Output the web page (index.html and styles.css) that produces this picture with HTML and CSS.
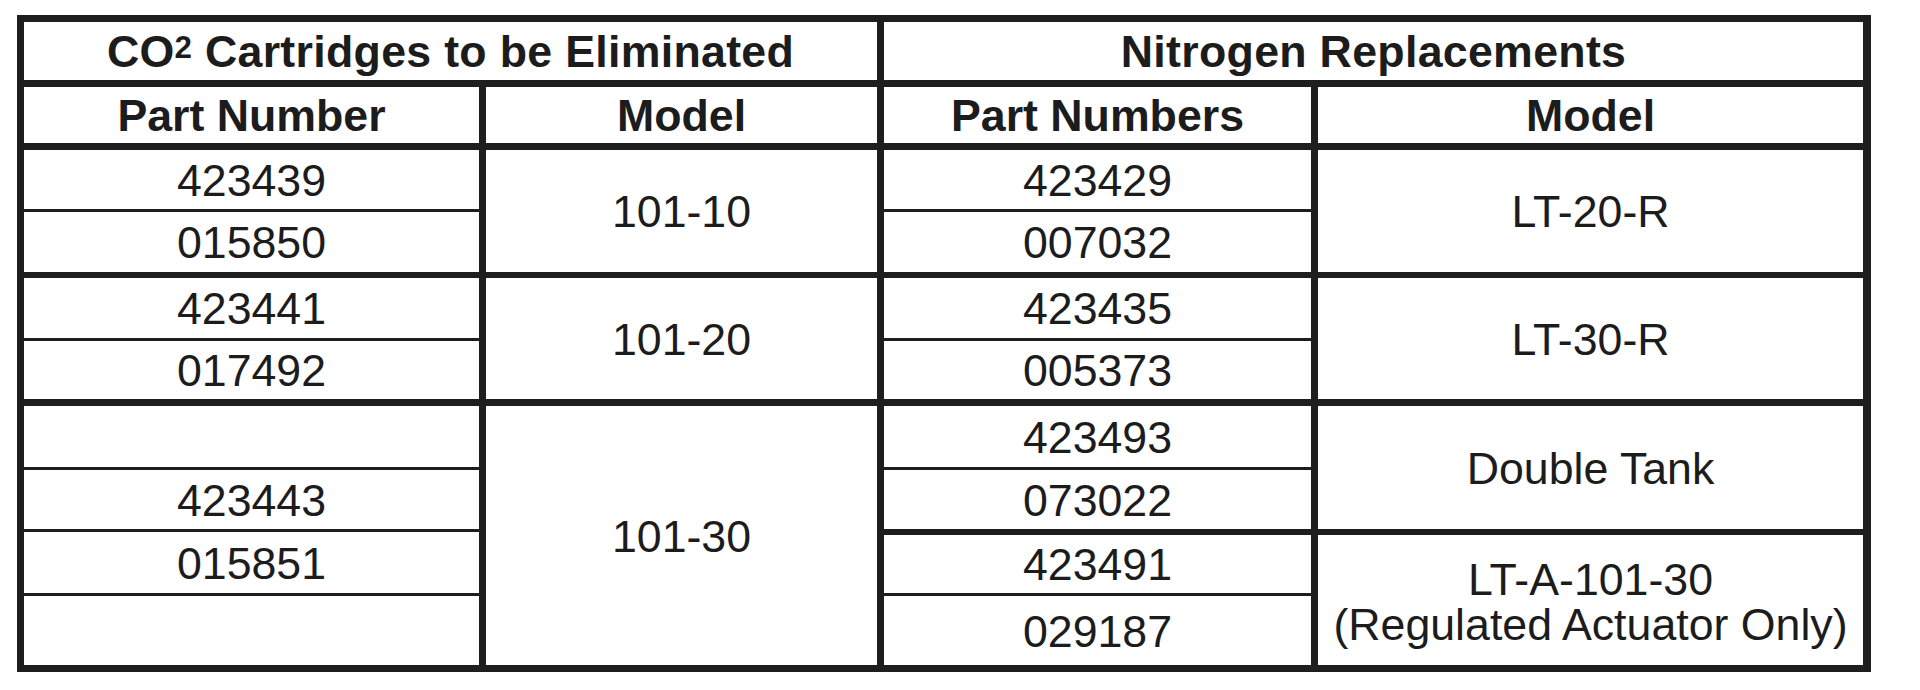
FILE: index.html
```html
<!DOCTYPE html>
<html lang="en">
<head>
<meta charset="utf-8">
<title>CO2 Cartridges to Nitrogen Replacements</title>
<link rel="stylesheet" href="styles.css">
</head>
<body>
<div class="sheet">
  <div class="grid">
    <div class="cell title span2 bb7"><span>CO<span class="sup">2</span> Cartridges to be Eliminated</span></div>
    <div class="cell title span2 last bb7">Nitrogen Replacements</div>

    <div class="cell head bb7">Part Number</div>
    <div class="cell head bb7">Model</div>
    <div class="cell head bb7">Part Numbers</div>
    <div class="cell head last bb7">Model</div>

    <div class="cell bb3">423439</div>
    <div class="cell rows2 bb6">101-10</div>
    <div class="cell bb3">423429</div>
    <div class="cell rows2 last bb6">LT-20-R</div>
    <div class="cell bb6">015850</div>
    <div class="cell bb6">007032</div>

    <div class="cell bb3">423441</div>
    <div class="cell rows2 bb7">101-20</div>
    <div class="cell bb3">423435</div>
    <div class="cell rows2 last bb7">LT-30-R</div>
    <div class="cell bb7">017492</div>
    <div class="cell bb7">005373</div>

    <div class="cell bb3"></div>
    <div class="cell rows4">101-30</div>
    <div class="cell bb3">423493</div>
    <div class="cell rows2 last bb3">Double Tank</div>
    <div class="cell bb3">423443</div>
    <div class="cell bb3">073022</div>
    <div class="cell bb3">015851</div>
    <div class="cell bt3 bb3">423491</div>
    <div class="cell rows2 last bt3 stack">
      <span>LT-A-101-30</span>
      <span>(Regulated Actuator Only)</span>
    </div>
    <div class="cell"></div>
    <div class="cell">029187</div>
  </div>
</div>
</body>
</html>
```

FILE: styles.css
```css
html, body {
  margin: 0;
  padding: 0;
  background: #ffffff;
}

body {
  font-family: "Liberation Sans", Arial, Helvetica, sans-serif;
  color: #1c1c1c;
}

.sheet {
  padding: 15px 0 0 17px;
}

.grid {
  display: grid;
  width: 1839px;
  grid-template-columns: 462px 398px 434px 545px;
  grid-template-rows: 65px 63px 62px 66px 63px 65px 64px 62px 64px 69px;
  border-style: solid;
  border-color: #1e1e1e;
  border-width: 7px 8px 7px 7px;
  background: #ffffff;
}

.cell {
  box-sizing: border-box;
  display: flex;
  align-items: center;
  justify-content: center;
  text-align: center;
  padding-top: 3px;
  font-size: 44.7px;
  line-height: 1;
  white-space: nowrap;
  border-right: 7px solid #1e1e1e;
  border-bottom: 0 solid #1e1e1e;
  border-top: 0 solid #1e1e1e;
}

.last {
  border-right: 0;
}

.title,
.head {
  font-weight: bold;
}

.title {
  letter-spacing: 0.3px;
}

.sup {
  font-size: 0.7em;
  position: relative;
  top: -0.3em;
}

.span2 {
  grid-column: span 2;
}

.rows2 {
  grid-row: span 2;
}

.rows4 {
  grid-row: span 4;
}

.bb3 {
  border-bottom-width: 3px;
}

.bb6 {
  border-bottom-width: 6px;
}

.bb7 {
  border-bottom-width: 7px;
}

.bt3 {
  border-top-width: 3px;
}

.stack {
  flex-direction: column;
  line-height: 45px;
}
```
